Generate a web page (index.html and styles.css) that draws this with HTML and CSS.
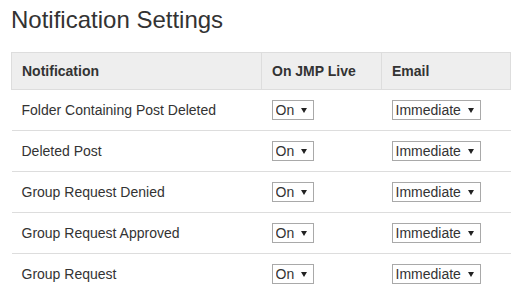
FILE: index.html
```html
<!DOCTYPE html>
<html lang="en">
<head>
  <meta charset="UTF-8" />
  <title>Notification Settings</title>
  <link rel="stylesheet" href="styles.css">
</head>
<body>
  <div class="page">
    <h1>Notification Settings</h1>

    <table class="settings">
      <thead>
        <tr>
          <th class="col-name">Notification</th>
          <th class="col-live">On JMP Live</th>
          <th>Email</th>
        </tr>
      </thead>
      <tbody>
        <tr>
          <td>Folder Containing Post Deleted</td>
          <td><span class="pick"><select><option>On</option><option>Off</option></select></span></td>
          <td><span class="pick"><select><option>Immediate</option><option>Daily</option><option>Never</option></select></span></td>
        </tr>
        <tr>
          <td>Deleted Post</td>
          <td><span class="pick"><select><option>On</option><option>Off</option></select></span></td>
          <td><span class="pick"><select><option>Immediate</option><option>Daily</option><option>Never</option></select></span></td>
        </tr>
        <tr>
          <td>Group Request Denied</td>
          <td><span class="pick"><select><option>On</option><option>Off</option></select></span></td>
          <td><span class="pick"><select><option>Immediate</option><option>Daily</option><option>Never</option></select></span></td>
        </tr>
        <tr>
          <td>Group Request Approved</td>
          <td><span class="pick"><select><option>On</option><option>Off</option></select></span></td>
          <td><span class="pick"><select><option>Immediate</option><option>Daily</option><option>Never</option></select></span></td>
        </tr>
        <tr>
          <td>Group Request</td>
          <td><span class="pick"><select><option>On</option><option>Off</option></select></span></td>
          <td><span class="pick"><select><option>Immediate</option><option>Daily</option><option>Never</option></select></span></td>
        </tr>
      </tbody>
    </table>
  </div>
</body>
</html>
```

FILE: styles.css
```css
body {
  margin: 0;
  font-family: 'Liberation Sans', Arial, sans-serif;
  color: #333;
  background: #fff;
}

.page {
  padding: 6px 11px;
}

h1 {
  margin: 0 0 19px;
  font-size: 24px;
  font-weight: normal;
  line-height: 27px;
}

.settings {
  width: 100%;
  border-collapse: collapse;
  font-size: 14px;
}

.settings th {
  background: #eee;
  border: 1px solid #ddd;
  padding: 10px;
  text-align: left;
  font-weight: bold;
  line-height: 16px;
}

.settings td {
  border-top: 1px solid #ddd;
  padding: 10px;
  line-height: 20px;
}

.col-name { width: 229px; }
.col-live { width: 99px; }

.pick {
  position: relative;
  display: inline-block;
  vertical-align: top;
}

.pick select {
  appearance: none;
  -webkit-appearance: none;
  display: block;
  height: 20px;
  margin: 0;
  padding: 0 18px 0 3px;
  border: 1px solid #a9a9a9;
  border-radius: 0;
  background: #fff;
  font-family: inherit;
  font-size: 14px;
  color: #333;
}

.pick::after {
  content: "";
  position: absolute;
  right: 7px;
  top: 8px;
  border-left: 3px solid transparent;
  border-right: 3px solid transparent;
  border-top: 5px solid #222;
  pointer-events: none;
}
```
